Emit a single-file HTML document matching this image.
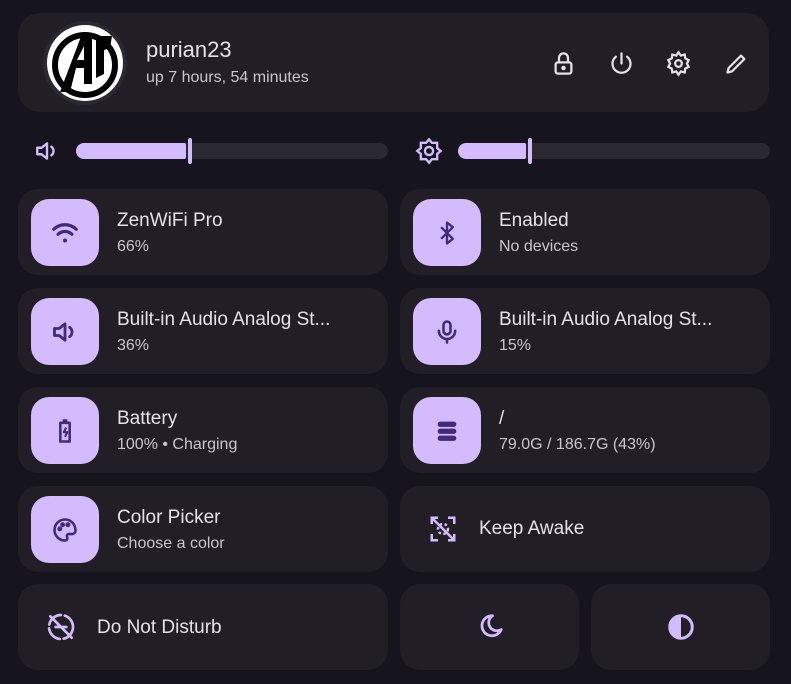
<!DOCTYPE html>
<html><head><style>
*{box-sizing:border-box;margin:0;padding:0}
body{width:791px;height:684px;background:#16141c;font-family:"Liberation Sans",sans-serif;position:relative;overflow:hidden;color:#e6e0e9}
.card{position:absolute;background:#211f25;border-radius:20px}
.ic{position:absolute;left:13px;top:10px;width:68px;height:67px;background:#d4bbfd;border-radius:18px;display:flex;align-items:center;justify-content:center}
.t{position:absolute;left:99px;top:21px;font-size:19px;color:#e6e0e9;white-space:nowrap}
.s{position:absolute;left:99px;top:49px;font-size:16px;color:#cac4cf;white-space:nowrap}
svg{display:block}
.sl{position:absolute;height:16px;background:#2a2830;border-radius:8px}
.fill{position:absolute;left:0;top:0;height:16px;background:#d4bbfd;border-radius:8px 2px 2px 8px}
.knob{position:absolute;top:-5px;width:4px;height:26px;background:#d4bbfd;border-radius:2px}
</style></head><body>
<div class="card" style="left:18px;top:13px;width:751px;height:99px;border-radius:22px">
  <div style="position:absolute;left:25px;top:8px;width:84px;height:84px;border-radius:50%;background:#2a2830;padding:3px">
    <svg width="78" height="78" viewBox="0 0 78 78"><circle cx="39" cy="39" r="38" fill="#fff"/><circle cx="39" cy="41" r="30" fill="none" stroke="#000" stroke-width="6"/><path d="M14 68 L36 10 L46 10 L46 60 L38 60 L38 44 L30 44 L24 68Z" fill="#000"/><path d="M31 36 L38 36 L38 22Z" fill="#fff"/><path d="M50 12 L66 12 L64 24 L58 26 L58 50 L50 54Z" fill="#000"/></svg>
  </div>
  <div style="position:absolute;left:128px;top:24px;font-size:22px">purian23</div>
  <div style="position:absolute;left:128px;top:56px;font-size:16px;color:#cac4cf">up 7 hours, 54 minutes</div>
  <svg style="position:absolute;left:532px;top:37px" width="27" height="27" viewBox="0 0 24 24" fill="none" stroke="#e6e0e9" stroke-width="2"><rect x="5" y="11" width="14" height="10" rx="2"/><path d="M8 11V7a4 4 0 0 1 8 0v4"/><circle cx="12" cy="16" r="1" fill="#e6e0e9"/></svg>
  <svg style="position:absolute;left:590px;top:37px" width="27" height="27" viewBox="0 0 24 24" fill="none" stroke="#e6e0e9" stroke-width="2" stroke-linecap="round"><path d="M12 3v9"/><path d="M7 6a8 8 0 1 0 10 0"/></svg>
  <svg style="position:absolute;left:647px;top:37px" width="27" height="27" viewBox="0 0 24 24" fill="none" stroke="#e6e0e9" stroke-width="2"><circle cx="12" cy="12" r="3"/><path d="M12 2l2 3 3.5-1 .5 3.5 3 1.5-1.5 3 1.5 3-3 1.5-.5 3.5-3.5-1-2 3-2-3-3.5 1-.5-3.5-3-1.5 1.5-3-1.5-3 3-1.5.5-3.5 3.5 1z"/></svg>
  <svg style="position:absolute;left:705px;top:37px" width="27" height="27" viewBox="0 0 24 24" fill="none" stroke="#e6e0e9" stroke-width="2" stroke-linejoin="round"><path d="M4 20l1-4L16 5l3 3L8 19z"/></svg>
</div>
<svg style="position:absolute;left:33px;top:138px" width="28" height="26" viewBox="0 0 24 24" fill="none" stroke="#d4bbfd" stroke-width="2.2" stroke-linejoin="round"><path d="M3 9h4l5-4v14l-5-4H3z"/><path d="M16 8a5 5 0 0 1 0 8" stroke-linecap="round"/></svg>
<div class="sl" style="left:76px;top:143px;width:312px"><div class="fill" style="width:110px"></div><div class="knob" style="left:112px"></div></div>
<svg style="position:absolute;left:415px;top:137px" width="28" height="28" viewBox="0 0 24 24" fill="none" stroke="#d4bbfd" stroke-width="2"><circle cx="12" cy="12" r="3.5"/><path d="M12 2l2.5 3H19v4.5l3 2.5-3 2.5V19h-4.5L12 22l-2.5-3H5v-4.5L2 12l3-2.5V5h4.5z"/></svg>
<div class="sl" style="left:458px;top:143px;width:312px"><div class="fill" style="width:68px"></div><div class="knob" style="left:70px"></div></div>

<div class="card" style="left:18px;top:189px;width:370px;height:86px"><div class="ic"><svg width="30" height="30" viewBox="0 0 24 24" fill="none" stroke="#3f2b7a" stroke-width="2.6" stroke-linecap="round"><path d="M3 9a13 13 0 0 1 18 0"/><path d="M6.5 13a8 8 0 0 1 11 0"/><circle cx="12" cy="18" r="1.6" fill="#3f2b7a" stroke="none"/></svg></div><div class="t">ZenWiFi Pro</div><div class="s">66%</div></div>
<div class="card" style="left:400px;top:189px;width:370px;height:86px"><div class="ic"><svg width="28" height="28" viewBox="0 0 24 24" fill="none" stroke="#3f2b7a" stroke-width="2" stroke-linejoin="round"><path d="M7 7l10 10-5 4V3l5 4L7 17"/></svg></div><div class="t">Enabled</div><div class="s">No devices</div></div>

<div class="card" style="left:18px;top:288px;width:370px;height:86px"><div class="ic"><svg width="28" height="28" viewBox="0 0 24 24" fill="none" stroke="#3f2b7a" stroke-width="2.4" stroke-linejoin="round"><path d="M3 9h4l5-4v14l-5-4H3z"/><path d="M16 8a5 5 0 0 1 0 8" stroke-linecap="round"/></svg></div><div class="t">Built-in Audio Analog St...</div><div class="s">36%</div></div>
<div class="card" style="left:400px;top:288px;width:370px;height:86px"><div class="ic"><svg width="28" height="28" viewBox="0 0 24 24" fill="none" stroke="#3f2b7a" stroke-width="2.2" stroke-linecap="round"><rect x="9" y="3" width="6" height="11" rx="3"/><path d="M5 11a7 7 0 0 0 14 0M12 18v3"/></svg></div><div class="t">Built-in Audio Analog St...</div><div class="s">15%</div></div>

<div class="card" style="left:18px;top:387px;width:370px;height:86px"><div class="ic"><svg width="28" height="30" viewBox="0 0 24 24" fill="none" stroke="#3f2b7a" stroke-width="2.2" stroke-linejoin="round"><path d="M10 3h4M8 5h8v16H8z"/><path d="M13 9l-2 4h3l-2 4" stroke-width="1.8"/></svg></div><div class="t">Battery</div><div class="s">100% • Charging</div></div>
<div class="card" style="left:400px;top:387px;width:370px;height:86px"><div class="ic"><svg width="28" height="28" viewBox="0 0 24 24" fill="#3f2b7a"><rect x="4" y="4" width="16" height="4.5" rx="2.2"/><rect x="4" y="10" width="16" height="4.5" rx="2.2"/><rect x="4" y="16" width="16" height="4.5" rx="2.2"/></svg></div><div class="t">/</div><div class="s">79.0G / 186.7G (43%)</div></div>

<div class="card" style="left:18px;top:486px;width:370px;height:86px"><div class="ic"><svg width="28" height="28" viewBox="0 0 24 24" fill="none" stroke="#3f2b7a" stroke-width="2.2"><path d="M12 3a9 9 0 0 0 0 18c1.5 0 2-1 2-2 0-1.5-1-2 0-3s2-.5 4-.5a3 3 0 0 0 3-3C21 7 17 3 12 3z"/><circle cx="7.5" cy="11" r="1" fill="#3f2b7a"/><circle cx="10" cy="7.5" r="1" fill="#3f2b7a"/><circle cx="14.5" cy="7.5" r="1" fill="#3f2b7a"/></svg></div><div class="t">Color Picker</div><div class="s">Choose a color</div></div>
<div class="card" style="left:400px;top:486px;width:370px;height:86px"><svg style="position:absolute;left:28px;top:28px" width="30" height="30" viewBox="0 0 24 24" fill="none" stroke="#d4bbfd" stroke-width="2"><path d="M3 8V3h5M16 3h5v5M21 16v5h-5M8 21H3v-5"/><path d="M3 3l18 18"/><circle cx="12" cy="12" r="4" stroke-dasharray="2 2"/></svg><div style="position:absolute;left:79px;top:32px;font-size:19px">Keep Awake</div></div>

<div class="card" style="left:18px;top:584px;width:370px;height:86px"><svg style="position:absolute;left:27px;top:27px" width="32" height="32" viewBox="0 0 24 24" fill="none" stroke="#d4bbfd" stroke-width="2" stroke-linecap="round"><circle cx="12" cy="12" r="9" stroke-dasharray="12 3"/><path d="M4 4l16 16M8 12h8"/></svg><div style="position:absolute;left:79px;top:33px;font-size:19px">Do Not Disturb</div></div>
<div class="card" style="left:400px;top:584px;width:179px;height:86px"><svg style="position:absolute;left:75px;top:28px" width="30" height="30" viewBox="0 0 24 24" fill="none" stroke="#d4bbfd" stroke-width="2.2" stroke-linejoin="round"><path d="M14 3a8 8 0 1 0 7 11 6.5 6.5 0 0 1-7-11z"/></svg></div>
<div class="card" style="left:591px;top:584px;width:179px;height:86px"><svg style="position:absolute;left:75px;top:28px" width="30" height="30" viewBox="0 0 24 24"><circle cx="12" cy="12" r="9" fill="none" stroke="#d4bbfd" stroke-width="2.4"/><path d="M12 3a9 9 0 0 0 0 18z" fill="#d4bbfd"/></svg></div>
</body></html>
